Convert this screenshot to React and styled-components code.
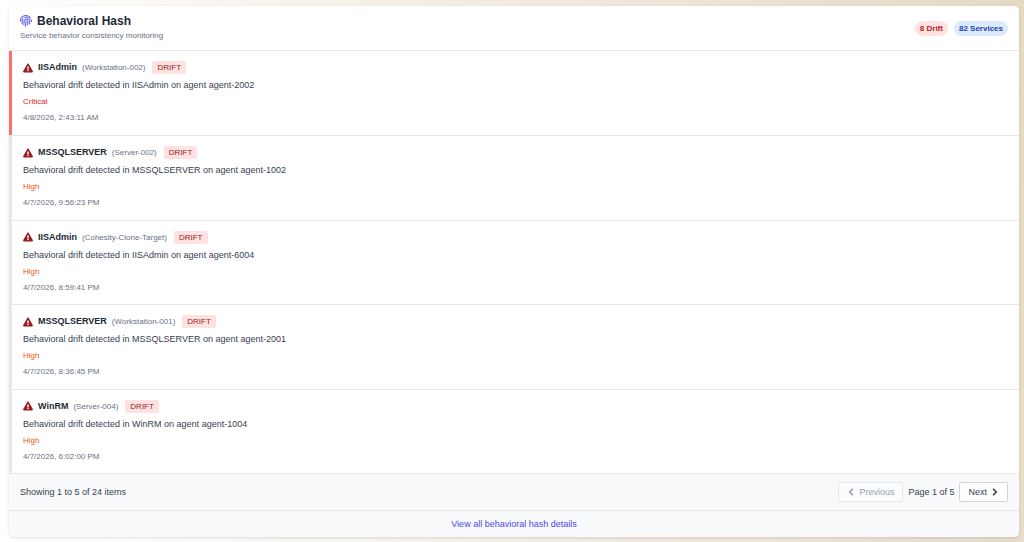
import React, { useState } from "react";
import styled, { createGlobalStyle } from "styled-components";
import {
  FaFingerprint,
  FaExclamationTriangle,
  FaChevronLeft,
  FaChevronRight,
} from "react-icons/fa";

const GlobalStyle = createGlobalStyle`
  * {
    box-sizing: border-box;
  }

  body {
    margin: 0;
    font-family: "Liberation Sans", Arial, sans-serif;
    color: #1f2937;
  }
`;

const Page = styled.main`
  display: flex;
  flex-direction: column;
  min-height: 100vh;
  padding: 6px 5px 5px 9px;
  background: linear-gradient(80deg, #ffffff 8%, #f3ece2 50%, #e5d9c5 100%);
`;

const Card = styled.section`
  display: flex;
  flex: 1;
  flex-direction: column;
  overflow: hidden;
  border-radius: 5px;
  background-color: #fff;
  box-shadow: 0 1px 3px rgba(0, 0, 0, 0.12);
`;

const CardHeader = styled.header`
  display: flex;
  justify-content: space-between;
  align-items: center;
  padding: 7px 11px;
  border-bottom: 1px solid #e5e7eb;
`;

const Title = styled.h2`
  display: flex;
  align-items: center;
  gap: 5px;
  margin: 0;
  font-size: 12px;
  line-height: 16px;

  svg {
    color: #6366f1;
  }
`;

const Subtitle = styled.p`
  margin: 0;
  font-size: 8px;
  line-height: 14px;
  color: #6b7280;
`;

const Badges = styled.div`
  display: flex;
  gap: 6px;
`;

const Badge = styled.span`
  padding: 0 5px;
  border-radius: 8px;
  font-size: 8px;
  font-weight: 700;
  line-height: 15px;
  color: ${(props) => (props.$kind === "drift" ? "#b91c1c" : "#1e40af")};
  background-color: ${(props) =>
    props.$kind === "drift" ? "#fee2e2" : "#dbeafe"};
`;

const EventList = styled.ul`
  display: flex;
  flex: 1;
  flex-direction: column;
  margin: 0;
  padding: 0;
  list-style: none;
`;

const EventItem = styled.li`
  flex: 1;
  padding: 9px 11px 8px;
  border-left: 3px solid
    ${(props) => (props.$severity === "Critical" ? "#f87171" : "#e5e7eb")};

  & + & {
    padding-top: 10px;
    padding-bottom: 7px;
    box-shadow: inset 0 1px #e5e7eb;
  }
`;

const EventHeading = styled.div`
  display: flex;
  align-items: center;
  gap: 5px;
  font-size: 9px;
  line-height: 15px;

  svg {
    color: #991b1b;
  }
`;

const Agent = styled.span`
  font-size: 8px;
  color: #6b7280;
`;

const Tag = styled.span`
  margin-left: 2px;
  padding: 0 5px;
  border-radius: 2px;
  font-size: 8px;
  line-height: 13px;
  color: #991b1b;
  background-color: #fee2e2;
`;

const Message = styled.p`
  margin: 3px 0 1px;
  font-size: 9px;
  line-height: 15px;
  color: #374151;
`;

const Detail = styled.p`
  margin: 0;
  font-size: 8px;
  line-height: 16px;
  color: ${(props) => props.$color || "#6b7280"};
`;

const Pagination = styled.nav`
  display: flex;
  justify-content: space-between;
  align-items: center;
  padding: 8px 11px;
  border-top: 1px solid #e5e7eb;
  border-bottom: 1px solid #e5e7eb;
  font-size: 9px;
  line-height: 18px;
  color: #374151;
  background-color: #f8fafc;
`;

const Pages = styled.div`
  display: flex;
  align-items: center;
  gap: 5px;
`;

const PageButton = styled.button`
  display: flex;
  align-items: center;
  gap: 4px;
  padding: 0 8px;
  border: 1px solid #d1d5db;
  border-radius: 2px;
  font: inherit;
  color: #374151;
  background-color: #fff;
  cursor: pointer;

  svg {
    stroke: currentColor;
    stroke-width: 32px;
  }

  &:disabled {
    opacity: 0.5;
    cursor: not-allowed;
  }
`;

const CardFooter = styled.footer`
  padding: 5px;
  font-size: 9px;
  line-height: 16px;
  text-align: center;
  background-color: #f8fafc;
`;

const DetailsLink = styled.a`
  color: #4f46e5;
  text-decoration: none;
`;

const severityColors = {
  Critical: "#dc2626",
  High: "#ea580c",
};

const events = [
  { service: "IISAdmin", host: "Workstation-002", agent: "agent-2002", severity: "Critical", time: "4/8/2026, 2:43:11 AM" },
  { service: "MSSQLSERVER", host: "Server-002", agent: "agent-1002", severity: "High", time: "4/7/2026, 9:56:23 PM" },
  { service: "IISAdmin", host: "Cohesity-Clone-Target", agent: "agent-6004", severity: "High", time: "4/7/2026, 8:59:41 PM" },
  { service: "MSSQLSERVER", host: "Workstation-001", agent: "agent-2001", severity: "High", time: "4/7/2026, 8:36:45 PM" },
  { service: "WinRM", host: "Server-004", agent: "agent-1004", severity: "High", time: "4/7/2026, 6:02:00 PM" },
];

const App = () => {
  const [page, setPage] = useState(1);

  return (
    <Page>
      <GlobalStyle />
      <Card>
        <CardHeader>
          <div>
            <Title>
              <FaFingerprint size={12} />
              Behavioral Hash
            </Title>
            <Subtitle>Service behavior consistency monitoring</Subtitle>
          </div>
          <Badges>
            <Badge $kind="drift">8 Drift</Badge>
            <Badge $kind="services">82 Services</Badge>
          </Badges>
        </CardHeader>
        <EventList>
          {events.map((event) => (
            <EventItem key={event.time} $severity={event.severity}>
              <EventHeading>
                <FaExclamationTriangle size={10} />
                <strong>{event.service}</strong>
                <Agent>({event.host})</Agent>
                <Tag>DRIFT</Tag>
              </EventHeading>
              <Message>
                Behavioral drift detected in {event.service} on agent {event.agent}
              </Message>
              <Detail $color={severityColors[event.severity]}>
                {event.severity}
              </Detail>
              <Detail>{event.time}</Detail>
            </EventItem>
          ))}
        </EventList>
        <Pagination>
          <span>Showing 1 to 5 of 24 items</span>
          <Pages>
            <PageButton disabled={page === 1} onClick={() => setPage(page - 1)}>
              <FaChevronLeft size={8} />
              Previous
            </PageButton>
            <span>Page {page} of 5</span>
            <PageButton disabled={page === 5} onClick={() => setPage(page + 1)}>
              Next
              <FaChevronRight size={8} />
            </PageButton>
          </Pages>
        </Pagination>
        <CardFooter>
          <DetailsLink href="#details">View all behavioral hash details</DetailsLink>
        </CardFooter>
      </Card>
    </Page>
  );
};

export default App;
